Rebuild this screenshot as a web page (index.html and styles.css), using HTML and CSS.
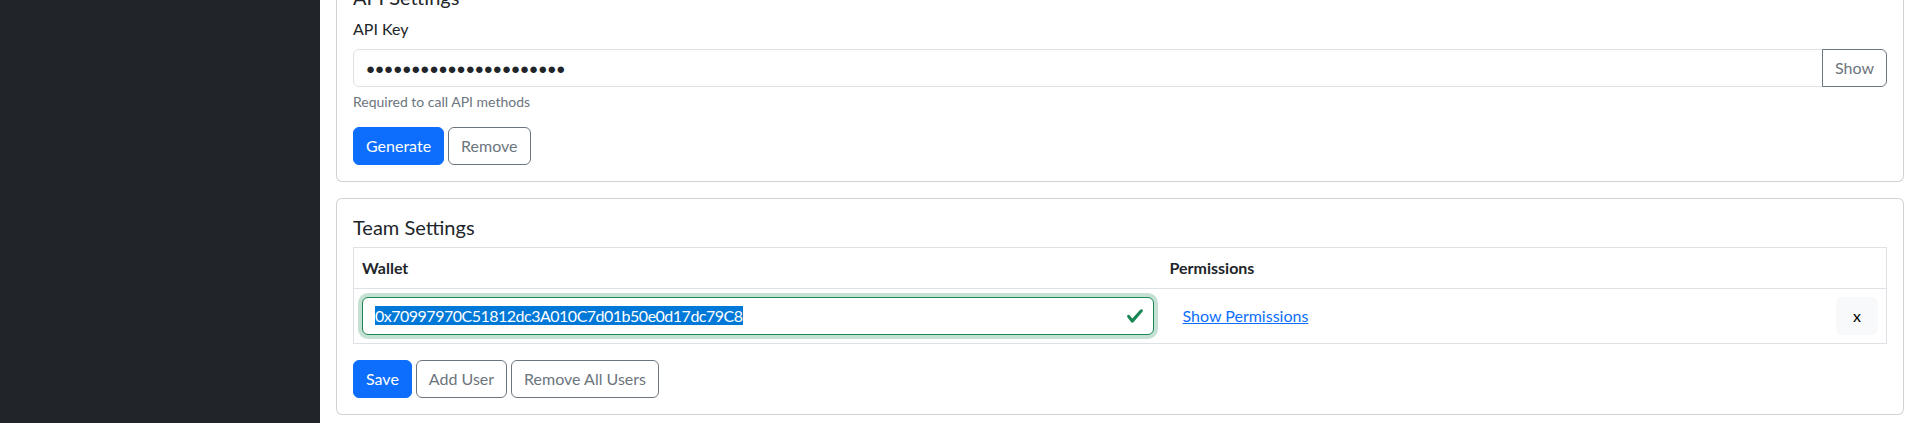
FILE: index.html
```html
<!DOCTYPE html>
<html lang="en">
<head>
<meta charset="utf-8">
<title>Settings</title>
<link rel="stylesheet" href="styles.css">
</head>
<body>
<div class="layout">
  <aside class="sidebar"></aside>
  <main class="main">
    <section class="card">
      <div class="card-body">
        <h5 class="card-title">API Settings</h5>
        <div class="field">
          <label class="form-label" for="apikey">API Key</label>
          <div class="input-group">
            <input id="apikey" class="form-control pw" type="text" value="●●●●●●●●●●●●●●●●●●●●●●" readonly>
            <button class="btn btn-outline-secondary" type="button">Show</button>
          </div>
          <div class="form-text">Required to call API methods</div>
        </div>
        <div class="actions">
          <button class="btn btn-primary" type="button">Generate</button>
          <button class="btn btn-outline-secondary" type="button">Remove</button>
        </div>
      </div>
    </section>

    <section class="card">
      <div class="card-body">
        <h5 class="card-title">Team Settings</h5>
        <table class="table">
          <colgroup>
            <col class="col-wallet">
            <col>
            <col class="col-action">
          </colgroup>
          <thead>
            <tr><th>Wallet</th><th>Permissions</th><th></th></tr>
          </thead>
          <tbody>
            <tr>
              <td>
                <div class="valid-wrap">
                  <div class="form-control is-valid"><span class="selected">0x70997970C51812dc3A010C7d01b50e0d17dc79C8</span></div>
                  <svg class="valid-icon" viewBox="0 0 8 8" width="18" height="18" aria-hidden="true"><path fill="#198754" d="M2.3 6.73.6 4.53c-.4-1.04.46-1.4 1.1-.8l1.1 1.4 3.4-3.8c.6-.63 1.6-.27 1.2.7l-4 4.6c-.43.5-.8.4-1.1.1z"/></svg>
                </div>
              </td>
              <td><button class="btn btn-link" type="button">Show Permissions</button></td>
              <td class="cell-right"><button class="btn btn-light btn-remove-row" type="button">x</button></td>
            </tr>
          </tbody>
        </table>
        <div class="actions">
          <button class="btn btn-primary" type="button">Save</button>
          <button class="btn btn-outline-secondary" type="button">Add User</button>
          <button class="btn btn-outline-secondary" type="button">Remove All Users</button>
        </div>
      </div>
    </section>
  </main>
</div>
</body>
</html>
```

FILE: styles.css
```css
* { box-sizing: border-box; }
html, body { margin: 0; height: 100%; }
body {
  font-family: Lato, "Liberation Sans", sans-serif;
  font-size: 16px;
  line-height: 1.5;
  color: #212529;
  background: #fff;
  overflow: hidden;
}
.layout { display: flex; min-height: 100vh; }
.sidebar { flex: 0 0 320px; background: #212529; }
.main { flex: 1; padding: 0 16px; margin-top: -32px; }

.card {
  border: 1px solid rgba(0, 0, 0, 0.175);
  border-radius: 6px;
  background: #fff;
}
.card + .card { margin-top: 16px; }
.card-body { padding: 16px; }
.card-title {
  font-size: 20px;
  font-weight: 400;
  line-height: 1.2;
  margin: 0 0 8px;
}
.field { margin-bottom: 15px; }
.form-label { display: block; margin-bottom: 8px; }
.input-group { display: flex; }
.form-control {
  display: block;
  width: 100%;
  height: 38px;
  padding: 6px 12px;
  font-family: inherit;
  font-size: 16px;
  line-height: 24px;
  color: #212529;
  background: #fff;
  border: 1px solid #dee2e6;
  border-radius: 6px;
  outline: none;
}
.input-group .form-control { flex: 1; border-radius: 6px 0 0 6px; }
.input-group .btn { border-radius: 0 6px 6px 0; margin-left: -1px; }
.pw { font-family: "Liberation Sans", sans-serif; font-size: 15px; }
.form-text { margin-top: 4px; font-size: 14px; line-height: 21px; color: #6c757d; }

.btn {
  display: inline-block;
  padding: 6px 12px;
  font-family: inherit;
  font-size: 16px;
  line-height: 24px;
  border: 1px solid transparent;
  border-radius: 6px;
  background: transparent;
  white-space: nowrap;
  cursor: pointer;
}
.btn-primary { background: #0d6efd; border-color: #0d6efd; color: #fff; }
.btn-outline-secondary { color: #6c757d; border-color: #6c757d; background: #fff; }
.btn-light { background: #f8f9fa; border-color: #f8f9fa; color: #000; }
.btn-link { color: #0d6efd; text-decoration: underline; }
.btn-remove-row { width: 42px; padding: 6px 0; text-align: center; }
.actions { display: flex; gap: 4px; }

.table {
  width: 100%;
  border-collapse: collapse;
  table-layout: fixed;
  border: 1px solid #dee2e6;
  margin-bottom: 16px;
}
.col-wallet { width: 808px; }
.col-action { width: 59px; }
.table th, .table td {
  padding: 8px;
  border-bottom: 1px solid #dee2e6;
  text-align: left;
  vertical-align: middle;
}
.table th { font-weight: 700; }
.table td.cell-right { text-align: right; }

.valid-wrap { position: relative; }
.is-valid {
  border-color: #198754;
  box-shadow: 0 0 0 4px rgba(25, 135, 84, 0.25);
  padding-right: 36px;
  white-space: nowrap;
  overflow: hidden;
}
.selected { background: #0078d7; color: #fff; letter-spacing: -0.5px; }
.valid-icon {
  position: absolute;
  right: 10px;
  top: 10px;
}
```
